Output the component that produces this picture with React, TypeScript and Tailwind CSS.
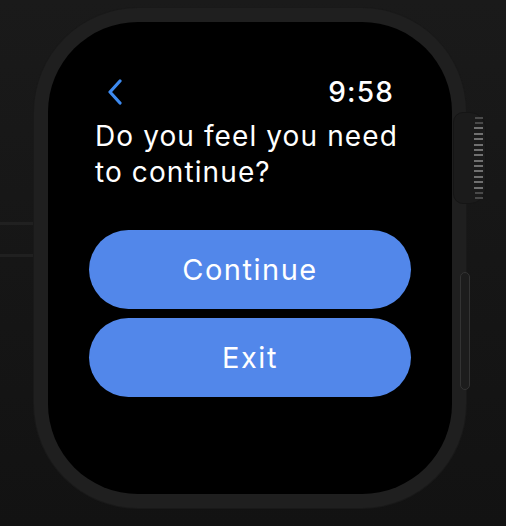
function Crown() {
  const ridges = Array.from({ length: 16 })
  return (
    <div className="absolute left-[419px] top-[104px] flex h-[92px] w-[33px] flex-col items-end justify-center gap-[3.4px] rounded-r-[16px] rounded-l-[10px] border border-[#151515] bg-[#1b1b1b] pr-[2px]">
      {ridges.map((_, i) => (
        <div
          key={i}
          className={
            i < 2 || i > 13
              ? "h-[2px] w-[8px] bg-[#4a4a4a]"
              : "h-[2px] w-[9px] bg-[#707070]"
          }
        />
      ))}
    </div>
  )
}

function App() {
  return (
    <div
      className="relative h-[526px] w-[506px] overflow-hidden bg-gradient-to-b from-[#1a1a1a] to-[#121212] pt-[8px] pl-[34px]"
      style={{ fontFamily: "Inter, 'Noto Sans', sans-serif" }}>
      <div className="absolute left-0 top-[222px] h-[3px] w-[33px] bg-[#202020]" />
      <div className="absolute left-0 top-[254px] h-[3px] w-[33px] bg-[#202020]" />

      <div className="relative h-[500px] w-[432px] rounded-[104px] bg-[#1f1f1f] p-[14px] shadow-[0_0_0_1px_#191919]">
        <Crown />
        <div className="absolute left-[426px] top-[264px] h-[118px] w-[10px] rounded-full border border-[#333] bg-[#1c1c1c]" />

        <div className="flex h-full w-full flex-col rounded-[90px] bg-black px-[41px] pt-[56px]">
          <div className="flex items-center justify-between px-[19px]">
            <svg width="16" height="26" viewBox="0 0 16 26" fill="none" className="ml-[-1px]">
              <path d="M13 2 L3 13 L13 24" stroke="#3d8af0" strokeWidth="3.2" strokeLinecap="round" strokeLinejoin="round" />
            </svg>
            <span className="mr-[-2px] text-[28px] font-medium leading-none tracking-[1.2px] text-white">9:58</span>
          </div>

          <p className="mt-[12px] px-[6px] text-[28px] leading-[36px] tracking-[1.1px] text-white">
            Do you feel you need to continue?
          </p>

          <div className="mt-[40px] flex flex-col gap-[9px]">
            <button className="h-[79px] w-full rounded-full bg-[#5287ea] text-[29px] tracking-[1.5px] text-white">
              Continue
            </button>
            <button className="h-[79px] w-full rounded-full bg-[#5287ea] text-[29px] tracking-[1.5px] text-white">
              Exit
            </button>
          </div>
        </div>
      </div>
    </div>
  )
}

export default App
